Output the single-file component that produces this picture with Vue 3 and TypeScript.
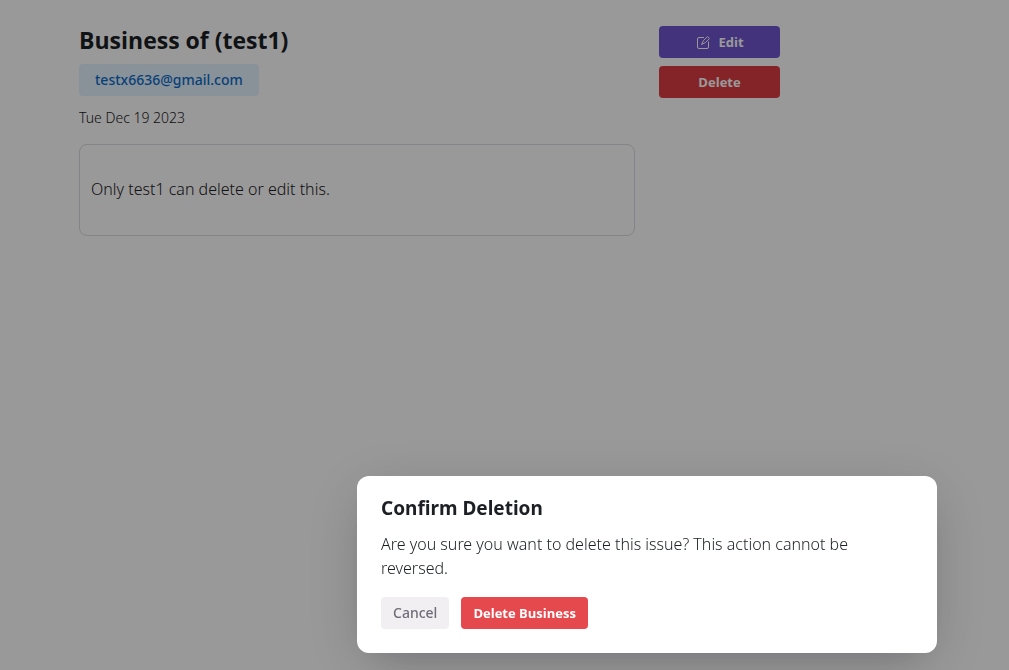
<script setup lang="ts">
import { ref } from 'vue'

const business = {
  title: 'Business of (test1)',
  email: 'testx6636@gmail.com',
  created: 'Tue Dec 19 2023',
  description: 'Only test1 can delete or edit this.',
}
const dialogOpen = ref(true)
</script>

<template>
  <div class="page">
    <main class="layout">
      <section class="details">
        <h1>{{ business.title }}</h1>
        <span class="badge">{{ business.email }}</span>
        <p class="date">{{ business.created }}</p>
        <div class="card"><p>{{ business.description }}</p></div>
      </section>
      <aside class="actions">
        <button type="button" class="btn edit">
          <svg width="15" height="15" viewBox="0 0 15 15" fill="none" stroke="currentColor" aria-hidden="true">
            <path d="M9 2.5H4Q2.5 2.5 2.5 4V12Q2.5 13.5 4 13.5H12Q13.5 13.5 13.5 12V6.5" />
            <path d="M12.5 1.5L14.5 3.5L10.3 7.6L6.5 9.5L8.4 5.7Z" stroke-linejoin="round" />
          </svg>
          Edit
        </button>
        <button type="button" class="btn delete" @click="dialogOpen = true">Delete</button>
      </aside>
    </main>

    <div v-if="dialogOpen" class="overlay">
      <div class="dialog" role="alertdialog" aria-modal="true" aria-labelledby="dialog-title" aria-describedby="dialog-text">
        <h2 id="dialog-title">Confirm Deletion</h2>
        <p id="dialog-text">Are you sure you want to delete this issue? This action cannot be reversed.</p>
        <div class="dialog-actions">
          <button type="button" class="btn cancel" @click="dialogOpen = false">Cancel</button>
          <button type="button" class="btn confirm" @click="dialogOpen = false">Delete Business</button>
        </div>
      </div>
    </div>
  </div>
</template>

<style>
body {
  margin: 0;
  background: #fff;
}
</style>

<style scoped>
.page {
  min-height: 100vh;
  font-family: "Segoe UI", "Noto Sans", "Open Sans", sans-serif;
  font-size: 16px;
  font-weight: 300;
  line-height: 24px;
  color: #1c2024;
}
h1, h2, p {
  margin: 0;
}
h1, h2 {
  font-weight: 700;
}
.layout {
  display: grid;
  grid-template-columns: minmax(0, 1fr) 121px;
  gap: 24px;
  padding: 26px 229px 24px 79px;
}
.details {
  display: flex;
  flex-direction: column;
  align-items: flex-start;
}
h1 {
  padding-bottom: 2px;
  font-family: "Segoe UI", "Open Sans", "Noto Sans", sans-serif;
  font-size: 23px;
  line-height: 28px;
}
.badge {
  margin-top: 8px;
  padding: 4px 16px;
  border-radius: 4px;
  background: #e4f3ff;
  color: #0d6cc9;
  font-size: 14px;
  font-weight: 500;
}
.date {
  margin-top: 12px;
  font-size: 14px;
  line-height: 20px;
}
.card {
  box-sizing: border-box;
  width: 100%;
  margin-top: 16px;
  padding: 32px 11px 34px;
  border: 1px solid #dcdcdf;
  border-radius: 8px;
}
.actions {
  display: flex;
  flex-direction: column;
  gap: 8px;
}
.btn {
  display: flex;
  align-items: center;
  justify-content: center;
  gap: 8px;
  height: 32px;
  padding: 0 12px;
  border: 0;
  border-radius: 4px;
  font: 700 13px/20px "Segoe UI", "Open Sans", "Noto Sans", sans-serif;
  color: #fff;
  cursor: pointer;
}
.edit {
  background: #6e56cf;
}
.delete {
  background: #dc3d43;
}
.confirm {
  background: #e5484d;
}
.cancel {
  background: #f2eff3;
  color: #6f6d78;
  font-family: "Segoe UI", "Noto Sans", "Open Sans", sans-serif;
  font-size: 14px;
  font-weight: 500;
}
.overlay {
  position: fixed;
  inset: 0;
  display: flex;
  align-items: flex-end;
  justify-content: flex-end;
  padding: 0 72px 17px;
  background: rgba(0, 0, 0, 0.4);
}
.dialog {
  box-sizing: border-box;
  width: 100%;
  max-width: 580px;
  padding: 16px 24px 24px;
  border-radius: 12px;
  background: #fff;
  box-shadow: 0 12px 60px rgba(0, 0, 0, 0.15), 0 16px 36px -20px rgba(32, 0, 60, 0.2);
}
h2 {
  font-size: 19px;
  line-height: 32px;
}
.dialog p {
  margin-top: 8px;
}
.dialog-actions {
  display: flex;
  gap: 12px;
  margin-top: 17px;
}
</style>
